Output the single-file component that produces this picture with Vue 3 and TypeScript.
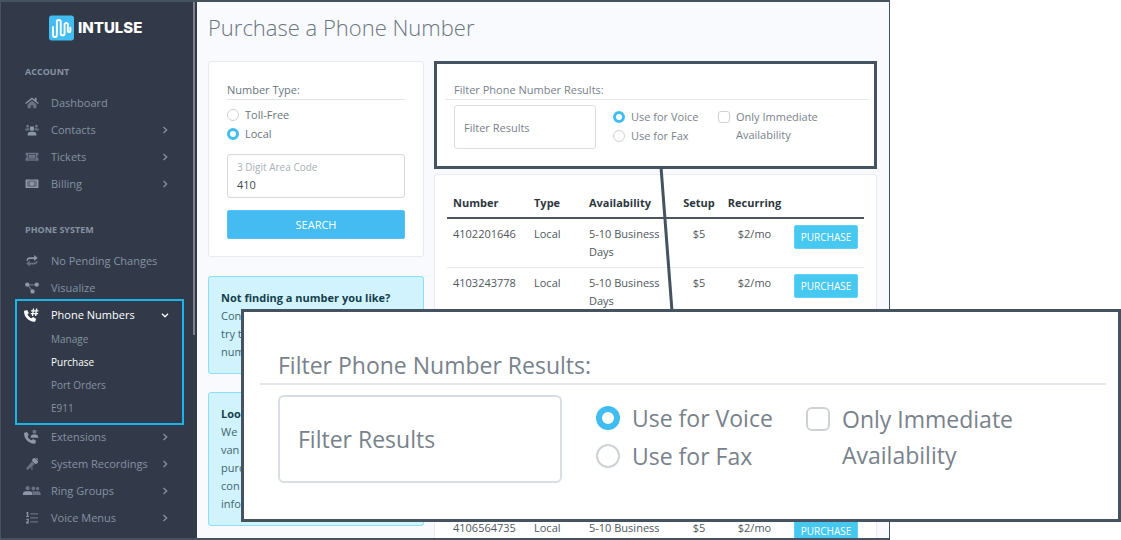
<script setup lang="ts">
import { ref } from 'vue'

interface Shape {
  d: string
  dim?: boolean
}
interface NavItem {
  label: string
  icon: string
  arrow?: boolean
}

const account: NavItem[] = [
  { label: 'Dashboard', icon: 'home' },
  { label: 'Contacts', icon: 'contacts', arrow: true },
  { label: 'Tickets', icon: 'ticket', arrow: true },
  { label: 'Billing', icon: 'bill', arrow: true },
]
const systemTop: NavItem[] = [
  { label: 'No Pending Changes', icon: 'repeat' },
  { label: 'Visualize', icon: 'diagram' },
]
const phonePages = ['Manage', 'Purchase', 'Port Orders', 'E911']
const systemRest: NavItem[] = [
  { label: 'Extensions', icon: 'extension', arrow: true },
  { label: 'System Recordings', icon: 'mic', arrow: true },
  { label: 'Ring Groups', icon: 'groups', arrow: true },
  { label: 'Voice Menus', icon: 'list', arrow: true },
]

const handset =
  'M-.6 3.2 2.4 2.2 4.4 5.8 2.9 7.3C3.8 9.3 5.4 10.9 7.6 11.8L9.2 10.4 12.6 12.4 11.8 15C11.6 15.6 11.2 15.9 10.6 15.8 4 15.2-.9 10.4-1.1 4-1.1 3.6-.9 3.3-.6 3.2Z'

const icons: Record<string, Shape[]> = {
  home: [
    { d: 'M8 5.2 13 9.3V14H9.4V10.8H6.6V14H3V9.3Z', dim: true },
    { d: 'M8 1.8 11.2 4.4V2H13.2V6L15.8 8.1 14.9 9.2 8 3.7 1.1 9.2.2 8.1Z' },
  ],
  contacts: [
    { d: 'M3 2a1.7 1.7 0 1 1 0 3.4a1.7 1.7 0 0 1 0-3.4ZM13 2a1.7 1.7 0 1 1 0 3.4a1.7 1.7 0 0 1 0-3.4ZM0 8.6C0 7 1 6.1 2.4 6.1H4.4L5 8.6ZM16 8.6C16 7 15 6.1 13.6 6.1H11.6L11 8.6Z', dim: true },
    { d: 'M8 3.6a2.7 2.7 0 1 1 0 5.4a2.7 2.7 0 0 1 0-5.4ZM3 14.4V13C3 11 4.4 9.9 6 9.9H10C11.6 9.9 13 11 13 13V14.4Z' },
  ],
  ticket: [
    { d: 'M.6 3H15.4V6A1.6 1.6 0 0 0 15.4 9.2V12.2H.6V9.2A1.6 1.6 0 0 0 .6 6ZM3.6 4.6V10.6H12.4V4.6Z', dim: true },
    { d: 'M4.2 5.2H11.8V10H4.2Z', dim: true },
  ],
  bill: [
    { d: 'M.6 3.4C.6 3 .9 2.8 1.2 2.8H14.8C15.1 2.8 15.4 3 15.4 3.4V12C15.4 12.4 15.1 12.6 14.8 12.6H1.2C.9 12.6.6 12.4.6 12ZM3.8 4.4A2 2 0 0 1 2.4 5.8V9.6A2 2 0 0 1 3.8 11H12.2A2 2 0 0 1 13.6 9.6V5.8A2 2 0 0 1 12.2 4.4ZM8 5.3a2.2 2.4 0 1 1 0 4.8a2.2 2.4 0 0 1 0-4.8Z' },
    { d: 'M8 5.3a2.2 2.4 0 1 1 0 4.8a2.2 2.4 0 0 1 0-4.8Z' },
    { d: 'M3.8 4.4H12.2A2 2 0 0 0 13.6 5.8V9.6A2 2 0 0 0 12.2 11H3.8A2 2 0 0 0 2.4 9.6V5.8A2 2 0 0 0 3.8 4.4ZM8 5.3a2.2 2.4 0 1 0 0 4.8a2.2 2.4 0 0 0 0-4.8Z', dim: true },
  ],
  repeat: [
    { d: 'M1.6 7.6C1.6 5 3.2 3.6 5.6 3.6H10.4V1.2L14.6 4.7 10.4 8.1V5.7H5.6C4.3 5.7 3.6 6.4 3.4 7.6Z' },
    { d: 'M14.4 8C14.4 10.6 12.8 12 10.4 12H5.6V14.4L1.4 10.9 5.6 7.5V9.9H10.4C11.7 9.9 12.4 9.2 12.6 8Z', dim: true },
  ],
  diagram: [
    { d: 'M4.4 3.6H11.4V5H4.4ZM4.6 5 8.4 10.4 7.2 11.2 3.4 5.8Z', dim: true },
    { d: 'M2.6 1.6a2.5 2.5 0 1 1 0 5a2.5 2.5 0 0 1 0-5ZM13.4 1.6a2.5 2.5 0 1 1 0 5a2.5 2.5 0 0 1 0-5ZM8.6 9.4a2.5 2.5 0 1 1 0 5a2.5 2.5 0 0 1 0-5Z' },
  ],
  numbers: [
    { d: handset },
    { d: 'M9 .5H10.5L10.2 2.6H12.3L12.6.5H14.1L13.8 2.6H15.4V4H13.6L13.4 5.6H15V7H13.2L12.9 9.2H11.4L11.7 7H9.6L9.3 9.2H7.8L8.1 7H6.5V5.6H8.3L8.5 4H6.9V2.6H8.7ZM10 4 9.8 5.6H11.9L12.1 4Z' },
  ],
  extension: [
    { d: handset },
    { d: 'M10.8-.2a2.3 2.3 0 1 1 0 4.6a2.3 2.3 0 0 1 0-4.6Z', dim: true },
    { d: 'M6.4 8.8C6.4 6.4 7.8 5.2 9.4 5.2H12.2C13.8 5.2 15.2 6.4 15.2 8.8Z' },
  ],
  mic: [
    { d: 'M8.1 4.8 11.2 7.9 3 14.8 1.2 13.2ZM7.2 10.8H8.6V14.6H7.2Z', dim: true },
    { d: 'M8 4.2C8 2.3 9.4 1 11.2 1L15 4.8C15 6.8 13.6 8 11.8 8ZM12 .8C13.9.6 15.4 2 15.2 4Z' },
  ],
  groups: [
    { d: 'M9.6 2.8a2.2 2.2 0 1 1 0 4.4a2.2 2.2 0 0 1 0-4.4ZM14.4 3.2a1.9 1.9 0 1 1 0 3.8a1.9 1.9 0 0 1 0-3.8ZM9.2 12.6C9.2 10 8.8 9 7.8 8.2H15.4C17 8.2 18 9.4 18 12.6Z', dim: true },
    { d: 'M3 8.2H5.4C7.4 8.2 8.6 9.6 8.6 11.4V12.6H-2.4V11.4C-2.4 9.6-1.2 8.2.8 8.2Z' },
    { d: 'M3 2.4a2.4 2.4 0 1 1 0 4.8a2.4 2.4 0 0 1 0-4.8Z', dim: true },
  ],
  list: [
    { d: 'M6 2.6H14.8V4H6ZM6 7.1H14.8V8.5H6ZM6 11.6H14.8V13H6Z', dim: true },
    { d: 'M2.2 1.2H3.7V5.6H4.4V6.8H1.4V5.6H2.2V2.8H1.5V1.8ZM1.3 8.8H4.4V11.4L3.2 12.9H4.5V14.2H1.2V12.9L3.1 10.8V10.1H1.3Z' },
  ],
}

interface Offer {
  number: string
  type: string
  availability: string
  setup: string
  recurring: string
}
const offer = (number: string, availability = '5-10 Business Days'): Offer => ({
  number,
  type: 'Local',
  availability,
  setup: '$5',
  recurring: '$2/mo',
})
const firstOffers = [offer('4102201646'), offer('4103243778')]
const lastOffers = [offer('4106564735', '5-10 Business')]

const numberType = ref('local')
const areaCode = ref('410')
const filterText = ref('')
const use = ref('voice')
const immediate = ref(false)
</script>

<template>
  <div class="stage">
    <div class="window">
      <nav class="sidebar">
        <a class="brand" href="#">
          <svg viewBox="0 0 26 26" aria-hidden="true">
            <rect width="26" height="26" rx="3" fill="#41bdf2" />
            <path
              d="M4.2 12V20.4a2 2 0 0 0 4 0V6.6a2 2 0 0 1 4 0V18.6a2 2 0 0 0 4 0V9.4a1.7 1.7 0 0 1 3.4 0V16a1.3 1.3 0 0 0 2.6 0V12.6"
              fill="none" stroke="#fff" stroke-width="2" stroke-linecap="round" stroke-linejoin="round"
            />
          </svg>
          <span>INTULSE</span>
        </a>

        <h2>ACCOUNT</h2>
        <a v-for="item in account" :key="item.label" class="nav-row" href="#">
          <svg class="icon" viewBox="0 0 16 16" aria-hidden="true">
            <path v-for="(s, i) in icons[item.icon]" :key="i" :d="s.d" :class="{ dim: s.dim }" fill-rule="evenodd" />
          </svg>
          <span>{{ item.label }}</span>
          <svg v-if="item.arrow" class="chevron" viewBox="0 0 8 8" aria-hidden="true"><path d="M2.5 1 5.7 4 2.5 7" /></svg>
        </a>

        <h2 class="second">PHONE SYSTEM</h2>
        <a v-for="item in systemTop" :key="item.label" class="nav-row" href="#">
          <svg class="icon" viewBox="0 0 16 16" aria-hidden="true">
            <path v-for="(s, i) in icons[item.icon]" :key="i" :d="s.d" :class="{ dim: s.dim }" fill-rule="evenodd" />
          </svg>
          <span>{{ item.label }}</span>
        </a>

        <div class="open-group">
          <a class="nav-row active" href="#">
            <svg class="icon" viewBox="0 0 16 16" aria-hidden="true">
              <path v-for="(s, i) in icons.numbers" :key="i" :d="s.d" fill-rule="evenodd" />
            </svg>
            <span>Phone Numbers</span>
            <svg class="chevron" viewBox="0 0 8 8" aria-hidden="true"><path d="M1 2.7 4 5.8 7 2.7" /></svg>
          </a>
          <a v-for="page in phonePages" :key="page" class="sub-row" :class="{ active: page === 'Purchase' }" href="#">{{ page }}</a>
        </div>

        <a v-for="item in systemRest" :key="item.label" class="nav-row" href="#">
          <svg class="icon" viewBox="0 0 16 16" aria-hidden="true">
            <path v-for="(s, i) in icons[item.icon]" :key="i" :d="s.d" :class="{ dim: s.dim }" fill-rule="evenodd" />
          </svg>
          <span>{{ item.label }}</span>
          <svg class="chevron" viewBox="0 0 8 8" aria-hidden="true"><path d="M2.5 1 5.7 4 2.5 7" /></svg>
        </a>
        <i class="scroll-thumb"></i>
      </nav>

      <main>
        <h1>Purchase a Phone Number</h1>
        <div class="columns">
          <div class="left">
            <form class="card search" @submit.prevent>
              <div class="legend">Number Type:</div>
              <label class="choice"><input v-model="numberType" type="radio" name="type" value="tollfree" />Toll-Free</label>
              <label class="choice"><input v-model="numberType" type="radio" name="type" value="local" />Local</label>
              <div class="code-box">
                <label for="code">3 Digit Area Code</label>
                <input id="code" v-model="areaCode" type="text" />
              </div>
              <button class="search-btn" type="submit">SEARCH</button>
            </form>
            <section class="notice">
              <strong>Not finding a number you like?</strong>
              <span>Con</span>
              <span>try t</span>
              <span>num</span>
            </section>
            <section class="notice">
              <strong>Loo</strong>
              <span>We</span>
              <span>van</span>
              <span>purc</span>
              <span>con</span>
              <span>info</span>
            </section>
          </div>

          <div class="right">
            <section class="filter">
              <div class="filter-title">Filter Phone Number Results:</div>
              <div class="filter-body">
                <input v-model="filterText" class="filter-input" type="text" placeholder="Filter Results" aria-label="Filter Results" />
                <div class="uses">
                  <label class="choice"><input v-model="use" type="radio" name="use" value="voice" />Use for Voice</label>
                  <label class="choice"><input v-model="use" type="radio" name="use" value="fax" />Use for Fax</label>
                </div>
                <label class="check"><input v-model="immediate" type="checkbox" /><span>Only Immediate Availability</span></label>
              </div>
            </section>

            <section class="card results">
              <table>
                <thead>
                  <tr>
                    <th class="c-number">Number</th>
                    <th class="c-type">Type</th>
                    <th>Availability</th>
                    <th class="c-setup">Setup</th>
                    <th class="c-rec">Recurring</th>
                    <th class="c-buy"></th>
                  </tr>
                </thead>
                <tbody>
                  <tr v-for="o in firstOffers" :key="o.number">
                    <td>{{ o.number }}</td>
                    <td>{{ o.type }}</td>
                    <td>{{ o.availability }}</td>
                    <td class="mid">{{ o.setup }}</td>
                    <td class="mid">{{ o.recurring }}</td>
                    <td><button class="buy" type="button">PURCHASE</button></td>
                  </tr>
                  <tr class="gap"><td colspan="6"></td></tr>
                  <tr v-for="o in lastOffers" :key="o.number">
                    <td>{{ o.number }}</td>
                    <td>{{ o.type }}</td>
                    <td>{{ o.availability }}</td>
                    <td class="mid">{{ o.setup }}</td>
                    <td class="mid">{{ o.recurring }}</td>
                    <td><button class="buy" type="button">PURCHASE</button></td>
                  </tr>
                </tbody>
              </table>
            </section>
          </div>
        </div>
      </main>
    </div>

    <svg class="connector" viewBox="0 0 16 144" aria-hidden="true"><path d="M2 0 13 144" /></svg>

    <section class="filter callout">
      <div class="filter-title">Filter Phone Number Results:</div>
      <div class="filter-body">
        <input v-model="filterText" class="filter-input" type="text" placeholder="Filter Results" aria-label="Filter Results, enlarged" />
        <div class="uses">
          <label class="choice"><input v-model="use" type="radio" name="use-large" value="voice" />Use for Voice</label>
          <label class="choice"><input v-model="use" type="radio" name="use-large" value="fax" />Use for Fax</label>
        </div>
        <label class="check"><input v-model="immediate" type="checkbox" /><span>Only Immediate Availability</span></label>
      </div>
    </section>
  </div>
</template>

<style>
body {
  margin: 0;
  background: #fff;
}
</style>

<style scoped>
* {
  box-sizing: border-box;
}
.stage {
  --u: 1px;
  --slate: #44535f;
  position: relative;
  height: 100vh;
  overflow: hidden;
  font-family: "Open Sans", "Noto Sans", sans-serif;
  font-size: 11px;
  line-height: 18px;
  color: #6a757e;
}
input,
button {
  font: inherit;
  margin: 0;
}
.window {
  display: grid;
  grid-template-columns: 196px 1fr;
  height: 100%;
  margin-right: 231px;
  border: 1px solid var(--slate);
  border-top-width: 2px;
  border-bottom-width: 2px;
  overflow: hidden;
  background: #f9fafe;
}

.sidebar {
  position: relative;
  background: #323a49;
  color: #8592a3;
}
.sidebar a {
  color: inherit;
  text-decoration: none;
}
.brand {
  display: flex;
  align-items: center;
  gap: 4px;
  padding: 13px 0 0 48px;
  font: 800 15px/26px "Inter", sans-serif;
}
.brand svg {
  width: 25px;
  height: 26px;
}
.brand span {
  color: #fff;
}
.sidebar h2 {
  margin: 22px 0 8px 24px;
  font-size: 9px;
  line-height: 18px;
  font-weight: 700;
}
.sidebar h2.second {
  margin-top: 24px;
}
.nav-row {
  display: flex;
  align-items: center;
  height: 27px;
  padding: 0 28px 0 23px;
}
.icon {
  width: 14px;
  height: 14px;
  margin: 0 12px 0 1px;
  fill: #8c98a8;
  overflow: visible;
}
.icon .dim {
  opacity: 0.6;
}
.chevron {
  width: 8px;
  height: 8px;
  margin-left: auto;
  fill: none;
  stroke: currentColor;
  stroke-width: 1.3;
}
.open-group {
  margin: 0 15px 0 16px;
  padding-bottom: 3px;
  outline: 2px solid #18b4ea;
}
.open-group .nav-row {
  padding: 0 13px 0 7px;
}
.sidebar .active {
  color: #fff;
}
.active .icon {
  fill: #fff;
}
.sub-row {
  display: block;
  padding-left: 34px;
  font-size: 10px;
  line-height: 23px;
}
.scroll-thumb {
  position: absolute;
  top: 0;
  right: 2px;
  width: 2px;
  height: 333px;
  background: #7c828c;
}

main {
  padding: 0 12px 0 11px;
}
h1 {
  margin: 0;
  padding: 8px 0 17px;
  font-size: 22px;
  line-height: 34px;
  font-weight: 300;
}
.columns {
  display: grid;
  grid-template-columns: 216px 1fr;
  gap: 10px;
}
.card {
  background: #fff;
  border: 1px solid #e9ebee;
  border-radius: 3px;
}
.search {
  padding: 19px 18px 17px;
  margin-bottom: 19px;
}
.legend {
  border-bottom: 1px solid #dfe4e9;
  margin-bottom: 5px;
}
.choice {
  display: flex;
  align-items: center;
  gap: calc(6 * var(--u));
  height: calc(19 * var(--u));
  white-space: nowrap;
}
.choice input,
.check input {
  appearance: none;
  flex: none;
  width: calc(12 * var(--u));
  height: calc(12 * var(--u));
  border: var(--u) solid #cfd2d5;
  border-radius: 50%;
  background: #fff;
}
.choice input:checked {
  border: calc(3 * var(--u)) solid #41bdf2;
}
.check input {
  border-radius: calc(3 * var(--u));
}
.code-box {
  margin: 11px 0 12px;
  padding: 4px 9px;
  border: 1px solid #d3d9de;
  border-radius: 3px;
}
.code-box label {
  display: block;
  font-size: 10px;
  line-height: 17px;
  color: #a9b0b6;
}
.code-box input {
  display: block;
  width: 100%;
  height: 17px;
  padding: 0;
  border: 0;
  outline: 0;
  background: none;
  color: #3f474d;
}
.search-btn {
  display: block;
  width: 100%;
  height: 29px;
  border: 1px solid #55c3f3;
  border-radius: 2px;
  background: #45bcf1;
  color: #fff;
}
.notice {
  padding: 12px;
  margin-bottom: 18px;
  border: 1px solid #8be0f8;
  border-radius: 3px;
  background: #d1f3fd;
  color: #3d666f;
}
.notice strong,
.notice span {
  display: block;
}
.notice strong {
  color: #143f4c;
  white-space: nowrap;
}

.filter {
  padding: calc(9 * var(--u)) calc(6 * var(--u)) calc(8 * var(--u)) calc(8 * var(--u));
  border: 3px solid var(--slate);
  background: #fff;
  line-height: calc(18 * var(--u));
  color: #78828b;
}
.right .filter {
  padding-top: 17px;
  padding-bottom: 17px;
}
.filter-title {
  padding-left: calc(9 * var(--u));
  border-bottom: var(--u) solid #e3e7eb;
}
.filter-body {
  display: flex;
  align-items: flex-start;
  padding: calc(5 * var(--u)) 0 0 calc(9 * var(--u));
}
.filter-input {
  width: calc(142 * var(--u));
  height: calc(44 * var(--u));
  padding: 0 calc(9 * var(--u));
  border: var(--u) solid #d9dee2;
  border-radius: calc(3 * var(--u));
  outline: 0;
  background: #fff;
  color: inherit;
}
.filter-input::placeholder {
  color: inherit;
  opacity: 1;
}
.uses {
  width: calc(88 * var(--u));
  margin: calc(2 * var(--u)) calc(17 * var(--u));
}
.check {
  display: flex;
  gap: calc(6 * var(--u));
  margin-top: calc(3 * var(--u));
}
.check input {
  margin-top: calc(3 * var(--u));
}
.check span {
  width: calc(90 * var(--u));
}

.results {
  margin-top: 5px;
  padding: 17px 12px;
}
table {
  width: 100%;
  table-layout: fixed;
  border-collapse: collapse;
  color: #4f575d;
}
th {
  height: 25px;
  padding: 2px 6px 5px;
  border-bottom: 2px solid #4b5661;
  text-align: left;
  font-weight: 700;
  color: #2d3740;
  white-space: nowrap;
}
td {
  height: 49px;
  padding: 6px;
  border-bottom: 1px solid #e6e9ed;
  vertical-align: top;
}
.gap td {
  height: 196px;
}
.c-number {
  width: 81px;
}
.c-type {
  width: 55px;
}
.c-setup {
  width: 44px;
}
.c-rec {
  width: 67px;
}
.c-buy {
  width: 76px;
}
.c-setup,
.c-rec {
  padding-left: 0;
  padding-right: 0;
  text-align: center;
}
.mid {
  text-align: center;
  padding-left: 0;
  padding-right: 0;
}
.buy {
  display: block;
  width: 100%;
  height: 24px;
  padding: 0;
  border: 1px solid #62d0f5;
  border-radius: 2px;
  background: #46c8f1;
  color: #fff;
  font-size: 10px;
}

.connector {
  position: absolute;
  left: 659px;
  top: 167px;
  width: 16px;
  height: 144px;
}
.connector path {
  fill: none;
  stroke: var(--slate);
  stroke-width: 3;
}
.callout {
  --u: 2px;
  position: absolute;
  left: 241px;
  right: 0;
  top: 309px;
  padding-top: 35px;
  padding-bottom: 36px;
  font-size: 23px;
}
</style>
